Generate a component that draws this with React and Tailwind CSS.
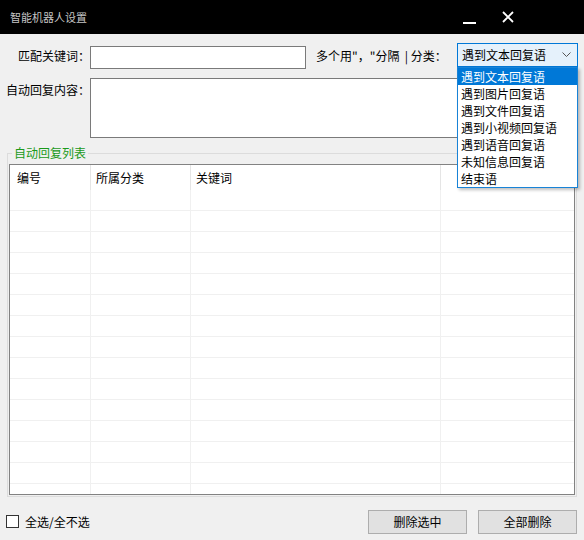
import React from 'react';

const font = { fontFamily: '"Noto Sans CJK SC", "Microsoft YaHei", sans-serif' };

const options = ['遇到文本回复语', '遇到图片回复语', '遇到文件回复语', '遇到小视频回复语', '遇到语音回复语', '未知信息回复语', '结束语'];

const ROWS = 14;

export default function App() {
  return (
    <div className="w-[584px] h-[540px] bg-[#f0f0f0] flex flex-col text-[12px] text-black overflow-hidden" style={font}>
      {/* 标题栏 */}
      <div className="h-[34px] bg-black flex items-center shrink-0">
        <span className="ml-[10px] text-[11px] text-[#c4c4c4]">智能机器人设置</span>
        <div className="ml-auto flex items-center h-full mr-[57px]">
          <div className="w-[40px] h-full flex items-center justify-center">
            <div className="w-[13px] h-[2px] bg-white mt-[12px]" />
          </div>
          <div className="w-[38px] h-full flex items-center justify-center">
            <svg width="12" height="12" viewBox="0 0 12 12">
              <path d="M1 1 L11 11 M11 1 L1 11" stroke="white" strokeWidth="1.8" fill="none" />
            </svg>
          </div>
        </div>
      </div>

      {/* 关键词 行 */}
      <div className="relative flex items-center mt-[9px] h-[25px]">
        <div className="w-[90px] text-right">匹配关键词：</div>
        <div className="w-[216px] h-[23px] bg-white border border-[#7a7a7a] mt-[3px]" />
        <div className="ml-[10px] whitespace-pre">多个用"，"分隔  | 分类：</div>
        <div className="absolute left-[457px] top-0 w-[121px]">
          <div className="h-[24px] bg-[#e5f1fb] border border-[#0078d7] flex items-center pl-[4px] pr-[6px]">
            <span>遇到文本回复语</span>
            <svg className="ml-auto" width="9" height="6" viewBox="0 0 9 6">
              <path d="M0.5 0.5 L4.5 4.5 L8.5 0.5" stroke="#555" strokeWidth="1" fill="none" />
            </svg>
          </div>
          <div className="absolute z-10 top-[24px] left-0 w-[121px] bg-white border border-[#1883d7] shadow-[2px_2px_3px_rgba(0,0,0,0.25)] flex flex-col">
            {options.map((o, i) => (
              <div key={o} className={`h-[17px] leading-[17px] pl-[3px] ${i === 0 ? 'bg-[#0078d7] text-white' : ''}`}>{o}</div>
            ))}
          </div>
        </div>
      </div>

      {/* 自动回复内容 */}
      <div className="flex mt-[10px]">
        <div className="w-[90px] text-right pt-[3px]">自动回复内容：</div>
        <div className="w-[488px] h-[60px] bg-white border border-[#7a7a7a]" />
      </div>

      {/* 自动回复列表 */}
      <div className="relative mt-[15px] ml-[7px] mr-[7px] h-[344px] border border-[#dcdcdc] pt-[10px] pl-[1px] pr-[1px] pb-[1px]">
        <span className="absolute -top-[9px] left-[4px] px-[2px] bg-[#f0f0f0] text-[#1a9a1a] leading-[16px]">自动回复列表</span>
        <div className="h-full bg-white border border-[#828282] flex flex-col overflow-hidden">
          <div className="flex h-[25px] shrink-0">
            <div className="w-[81px] pl-[7px] flex items-center border-r border-[#e5e5e5]">编号</div>
            <div className="w-[100px] pl-[5px] flex items-center border-r border-[#e5e5e5]">所属分类</div>
            <div className="w-[250px] pl-[5px] flex items-center border-r border-[#e5e5e5]">关键词</div>
            <div className="flex-1" />
          </div>
          {Array.from({ length: ROWS }).map((_, i) => (
            <div key={i} className="flex h-[21px] shrink-0 border-b border-[#f0f0f0]">
              <div className="w-[81px] border-r border-[#f0f0f0]" />
              <div className="w-[100px] border-r border-[#f0f0f0]" />
              <div className="w-[250px] border-r border-[#f0f0f0]" />
              <div className="flex-1" />
            </div>
          ))}
          <div className="flex flex-1">
            <div className="w-[81px] border-r border-[#f0f0f0]" />
            <div className="w-[100px] border-r border-[#f0f0f0]" />
            <div className="w-[250px] border-r border-[#f0f0f0]" />
            <div className="flex-1" />
          </div>
        </div>
      </div>

      {/* 底部 */}
      <div className="flex items-center mt-[12px] h-[25px]">
        <div className="ml-[6px] w-[13px] h-[13px] bg-white border border-[#333]" />
        <span className="ml-[6px]">全选/全不选</span>
        <button className="ml-auto w-[99px] h-[24px] bg-[#e1e1e1] border border-[#adadad]">删除选中</button>
        <button className="ml-[11px] mr-[7px] w-[99px] h-[24px] bg-[#e1e1e1] border border-[#adadad]">全部删除</button>
      </div>
    </div>
  );
}
